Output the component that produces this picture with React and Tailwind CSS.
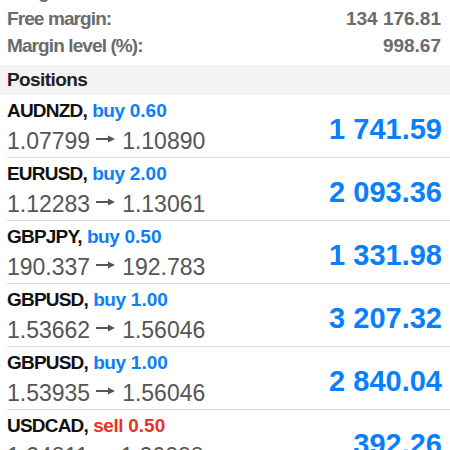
const summary = [
  { label: 'Margin:', value: '13 507.04' },
  { label: 'Free margin:', value: '134 176.81' },
  { label: 'Margin level (%):', value: '998.67' },
]

const positions = [
  { symbol: 'AUDNZD', side: 'buy', volume: '0.60', open: '1.07799', current: '1.10890', profit: '1 741.59' },
  { symbol: 'EURUSD', side: 'buy', volume: '2.00', open: '1.12283', current: '1.13061', profit: '2 093.36' },
  { symbol: 'GBPJPY', side: 'buy', volume: '0.50', open: '190.337', current: '192.783', profit: '1 331.98' },
  { symbol: 'GBPUSD', side: 'buy', volume: '1.00', open: '1.53662', current: '1.56046', profit: '3 207.32' },
  { symbol: 'GBPUSD', side: 'buy', volume: '1.00', open: '1.53935', current: '1.56046', profit: '2 840.04' },
  { symbol: 'USDCAD', side: 'sell', volume: '0.50', open: '1.24811', current: '1.20288', profit: '392.26' },
]

function Arrow() {
  return (
    <svg width="20" height="10" viewBox="0 0 20 10" className="inline-block mx-[6px] mb-[4px] align-middle">
      <path d="M0 5h13" stroke="#555" strokeWidth="2" />
      <path d="M12 1.5L19 5l-7 3.5z" fill="#555" />
    </svg>
  )
}

function PositionRow({ p }) {
  return (
    <div className="flex justify-between h-[63px] ml-[7px] pr-[8px] border-b border-[#dcdcdc] shrink-0">
      <div className="pt-[4px]">
        <div className="text-[19px] leading-[24px] font-bold whitespace-nowrap">
          <span className="text-[#111] tracking-[-0.8px]">{p.symbol},</span>{' '}
          <span className={p.side === 'buy' ? 'text-[#0a7ffb]' : 'text-[#e5352a]'}>
            <span className="tracking-[-0.5px]">{p.side}</span> {p.volume}
          </span>
        </div>
        <div className="mt-[5px] text-[23px] leading-[26px] text-[#555] whitespace-nowrap flex items-center">
          <span>{p.open}</span>
          <Arrow />
          <span>{p.current}</span>
        </div>
      </div>
      <div className="pt-[17px] text-[29px] leading-[34px] font-bold text-[#0a7ffb]">{p.profit}</div>
    </div>
  )
}

export default function App() {
  return (
    <div className="w-[450px] h-[450px] overflow-hidden bg-white font-['Liberation_Sans',Arial,sans-serif] flex flex-col">
      <div className="mt-[-22px] pb-[6px] px-[7px] pr-[9px] shrink-0">
        {summary.map((s) => (
          <div key={s.label} className="flex justify-between h-[27px] text-[19px] leading-[27px] font-bold text-[#6b6b6b]">
            <span className="tracking-[-0.9px]">{s.label}</span>
            <span>{s.value}</span>
          </div>
        ))}
      </div>
      <div className="h-[30px] bg-[#f3f3f3] px-[7px] text-[19px] leading-[30px] font-bold text-[#222] tracking-[-0.6px] shrink-0">
        Positions
      </div>
      {positions.map((p, i) => (
        <PositionRow key={i} p={p} />
      ))}
    </div>
  )
}
